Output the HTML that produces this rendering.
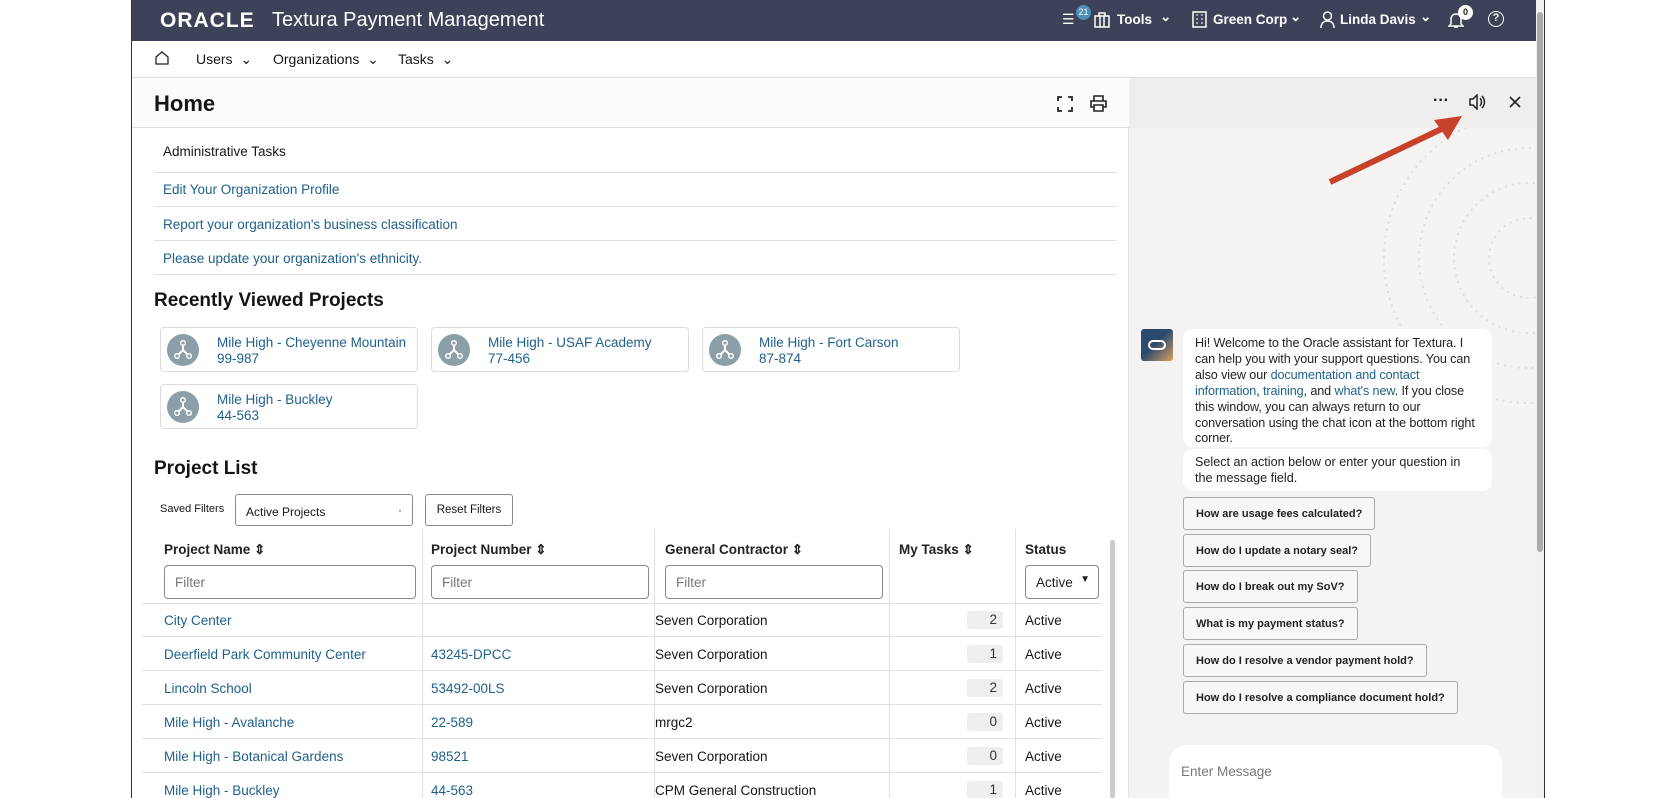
<!DOCTYPE html>
<html><head><meta charset="utf-8"><style>
*{box-sizing:border-box;margin:0;padding:0}
body{width:1680px;height:798px;background:#fff;font-family:"Liberation Sans",sans-serif;position:relative;overflow:hidden;color:#161513}
.frame{position:absolute;left:131px;top:0;width:1414px;height:798px;border-left:1px solid #333;border-right:1px solid #333;overflow:hidden;background:#fff}
.hdr{position:absolute;left:0;top:0;width:100%;height:41px;background:#3e4259;color:#fff}
.abs{position:absolute}
.nav{position:absolute;top:41px;left:0;width:1412px;height:37px;border-bottom:1px solid #ddd;font-size:14px}
.main{position:absolute;left:0;top:78px;width:997px;height:720px;background:#fff;border-right:1px solid #e2e2e2}
.chat{position:absolute;left:997px;top:78px;width:407px;height:720px;background:#f4f3f1}
.sb{position:absolute;left:1404px;top:0;width:8px;height:798px;background:#f1f1f1}
a,.lk{color:#1f5f8b;text-decoration:none}
.line{position:absolute;height:1px;background:#e0e0e0}
.card{position:absolute;width:258px;height:45px;border:1px solid #ddd;border-radius:4px;background:#fff;font-size:13.5px;color:#1f5f8b}
.card .av{position:absolute;left:6px;top:6px;width:32px;height:32px;border-radius:50%;background:#8c9ea8}
.card .t{position:absolute;left:56px;top:7px;line-height:16px}
.th{position:absolute;top:542px;font-size:13.5px;font-weight:bold;color:#222}
.fi{position:absolute;top:565px;height:34px;border:1px solid #888;border-radius:4px;font-size:13.5px;color:#777;padding:9px 10px}
.row{position:absolute;left:10px;width:960px;height:34px;border-bottom:1px solid #e0e0e0;font-size:13.5px}
.row span{position:absolute;top:10px}
.cnt{position:absolute;left:825px;top:8px;width:36px;height:18px;background:#eee;border-radius:3px;text-align:right;padding-right:6px;padding-top:1px;color:#333}
.btn{position:absolute;height:33px;border:1px solid #aaa;border-radius:3px;background:#f7f7f7;font-size:11px;font-weight:bold;padding:10px 12px;color:#222;white-space:nowrap}
.hi{position:absolute;top:12px;font-size:13.5px;font-weight:bold}
</style></head><body>
<div class="frame">
<div class="hdr">
 <div class="abs" style="left:28px;top:9px;font-size:21px;letter-spacing:1px;font-weight:bold">ORACLE</div>
 <div class="abs" style="left:140px;top:9px;font-size:20px">Textura Payment Management</div>
 <div class="abs" style="left:930px;top:11px;font-size:14px">☰</div>
 <div class="abs" style="left:944px;top:5px;width:15px;height:15px;border-radius:50%;background:#4a90b8;font-size:9px;text-align:center;line-height:15px">21</div>
 <svg class="abs" style="left:962px;top:12px" width="16" height="16"><rect x="1" y="4" width="14" height="11" fill="none" stroke="#fff" stroke-width="1.5"/><path d="M5 4V1h6v3M6 4v11M10 4v11" stroke="#fff" fill="none" stroke-width="1.5"/></svg>
 <div class="hi" style="left:985px">Tools</div><div class="hi" style="left:1028px;top:9px">⌄</div>
 <svg class="abs" style="left:1060px;top:11px" width="15" height="17"><rect x="1" y="1" width="13" height="15" fill="none" stroke="#fff" stroke-width="1.5"/><path d="M4 4h2M9 4h2M4 8h2M9 8h2M4 12h2M9 12h2" stroke="#fff"/></svg>
 <div class="hi" style="left:1081px">Green Corp</div><div class="hi" style="left:1158px;top:9px">⌄</div>
 <svg class="abs" style="left:1188px;top:11px" width="15" height="17"><circle cx="7.5" cy="5" r="4" fill="none" stroke="#fff" stroke-width="1.5"/><path d="M1 17c0-5 3-7 6.5-7s6.5 2 6.5 7" fill="none" stroke="#fff" stroke-width="1.5"/></svg>
 <div class="hi" style="left:1208px">Linda Davis</div><div class="hi" style="left:1288px;top:9px">⌄</div>
 <svg class="abs" style="left:1316px;top:11px" width="16" height="18"><path d="M3 13V8a5 5 0 0 1 10 0v5l2 2H1z M6 16h4" fill="none" stroke="#fff" stroke-width="1.5"/></svg>
 <div class="abs" style="left:1326px;top:5px;width:15px;height:15px;border-radius:50%;background:#fff;color:#222;font-size:9px;font-weight:bold;text-align:center;line-height:15px">0</div>
 <div class="abs" style="left:1356px;top:11px;width:16px;height:16px;border:1.5px solid #fff;border-radius:50%;font-size:11px;text-align:center;line-height:13px;font-weight:bold">?</div>
</div>
<div class="nav">
 <svg class="abs" style="left:23px;top:10px" width="14" height="14"><path d="M1 6L7 1l6 5v7H1z" fill="none" stroke="#222" stroke-width="1.3"/></svg>
 <div class="abs" style="left:64px;top:10px">Users &nbsp;⌄</div>
 <div class="abs" style="left:141px;top:10px">Organizations &nbsp;⌄</div>
 <div class="abs" style="left:266px;top:10px">Tasks &nbsp;⌄</div>
</div>
<div class="main"></div>
<div class="abs" style="left:0;top:78px;width:997px;height:50px;background:#fcfcfc;border-bottom:1px solid #e0e0e0"></div>
<div class="abs" style="left:22px;top:91px;font-size:22px;font-weight:bold">Home</div>
<svg class="abs" style="left:925px;top:96px" width="16" height="16"><path d="M1 5V1h4M11 1h4v4M15 11v4h-4M5 15H1v-4" fill="none" stroke="#222" stroke-width="1.8"/></svg>
<svg class="abs" style="left:958px;top:95px" width="17" height="17"><path d="M4 6V1h9v5M4 12H1V6h15v6h-3M4 10h9v6H4z" fill="none" stroke="#222" stroke-width="1.6"/></svg>
<div class="abs" style="left:31px;top:144px;font-size:13.5px">Administrative Tasks</div>
<div class="line" style="left:22px;top:172px;width:962px"></div>
<div class="abs lk" style="left:31px;top:182px;font-size:13.5px">Edit Your Organization Profile</div>
<div class="line" style="left:22px;top:206px;width:962px"></div>
<div class="abs lk" style="left:31px;top:217px;font-size:13.5px">Report your organization's business classification</div>
<div class="line" style="left:22px;top:240px;width:962px"></div>
<div class="abs lk" style="left:31px;top:251px;font-size:13.5px">Please update your organization's ethnicity.</div>
<div class="line" style="left:22px;top:274px;width:962px"></div>
<div class="abs" style="left:22px;top:290px;font-size:19px;font-weight:bold">Recently Viewed Projects</div>
<svg width="0" height="0" style="position:absolute"><defs><g id="ic"><path d="M16 9v7l-6 6M16 16l6 6" stroke="#fff" stroke-width="2" fill="none"/><circle cx="16" cy="9" r="2.3" fill="#8c9ea8" stroke="#fff" stroke-width="1.5"/><circle cx="10" cy="22" r="2.3" fill="#8c9ea8" stroke="#fff" stroke-width="1.5"/><circle cx="22" cy="22" r="2.3" fill="#8c9ea8" stroke="#fff" stroke-width="1.5"/></g></defs></svg>
<div class="card" style="left:28px;top:327px"><div class="av"><svg width="32" height="32"><use href="#ic"/></svg></div><div class="t">Mile High - Cheyenne Mountain<br>99-987</div></div>
<div class="card" style="left:299px;top:327px"><div class="av"><svg width="32" height="32"><use href="#ic"/></svg></div><div class="t">Mile High - USAF Academy<br>77-456</div></div>
<div class="card" style="left:570px;top:327px"><div class="av"><svg width="32" height="32"><use href="#ic"/></svg></div><div class="t">Mile High - Fort Carson<br>87-874</div></div>
<div class="card" style="left:28px;top:384px"><div class="av"><svg width="32" height="32"><use href="#ic"/></svg></div><div class="t">Mile High - Buckley<br>44-563</div></div>
<div class="abs" style="left:22px;top:458px;font-size:19px;font-weight:bold">Project List</div>
<div class="abs" style="left:28px;top:503px;font-size:11px">Saved Filters</div>
<div class="abs" style="left:103px;top:494px;width:178px;height:32px;border:1px solid #888;border-radius:3px;font-size:12px;padding:10px 10px">Active Projects<span style="position:absolute;right:10px;top:8px">·</span></div>
<div class="abs" style="left:293px;top:494px;width:88px;height:32px;border:1px solid #888;border-radius:3px;font-size:11.5px;padding:9px 0;text-align:center;white-space:nowrap">Reset Filters</div>
<div class="abs" style="left:290px;top:529px;width:1px;height:269px;background:#e0e0e0"></div>
<div class="abs" style="left:522px;top:529px;width:1px;height:269px;background:#e0e0e0"></div>
<div class="abs" style="left:757px;top:529px;width:1px;height:269px;background:#e0e0e0"></div>
<div class="abs" style="left:883px;top:529px;width:1px;height:269px;background:#e0e0e0"></div>
<div class="th" style="left:32px">Project Name ⇕</div>
<div class="th" style="left:299px">Project Number ⇕</div>
<div class="th" style="left:533px">General Contractor ⇕</div>
<div class="th" style="left:767px">My Tasks ⇕</div>
<div class="th" style="left:893px">Status</div>
<div class="fi" style="left:32px;width:252px">Filter</div>
<div class="fi" style="left:299px;width:218px">Filter</div>
<div class="fi" style="left:533px;width:218px">Filter</div>
<div class="fi" style="left:893px;width:74px;color:#222;font-weight:normal">Active <span style="position:absolute;right:8px;top:8px;font-size:10px">▼</span></div>
<div class="row" style="top:570px"></div>
<div class="row" style="top:603px"><span class="lk" style="left:22px">City Center</span><span style="left:513px">Seven Corporation</span><div class="cnt">2</div><span style="left:883px">Active</span></div>
<div class="row" style="top:637px"><span class="lk" style="left:22px">Deerfield Park Community Center</span><span class="lk" style="left:289px">43245-DPCC</span><span style="left:513px">Seven Corporation</span><div class="cnt">1</div><span style="left:883px">Active</span></div>
<div class="row" style="top:671px"><span class="lk" style="left:22px">Lincoln School</span><span class="lk" style="left:289px">53492-00LS</span><span style="left:513px">Seven Corporation</span><div class="cnt">2</div><span style="left:883px">Active</span></div>
<div class="row" style="top:705px"><span class="lk" style="left:22px">Mile High - Avalanche</span><span class="lk" style="left:289px">22-589</span><span style="left:513px">mrgc2</span><div class="cnt">0</div><span style="left:883px">Active</span></div>
<div class="row" style="top:739px"><span class="lk" style="left:22px">Mile High - Botanical Gardens</span><span class="lk" style="left:289px">98521</span><span style="left:513px">Seven Corporation</span><div class="cnt">0</div><span style="left:883px">Active</span></div>
<div class="row" style="top:773px;border:none"><span class="lk" style="left:22px">Mile High - Buckley</span><span class="lk" style="left:289px">44-563</span><span style="left:513px">CPM General Construction</span><div class="cnt">1</div><span style="left:883px">Active</span></div>
<div class="abs" style="left:978px;top:540px;width:5px;height:258px;background:#ccc;border-radius:2px"></div>

<div class="chat">
 <svg class="abs" style="left:150px;top:30px" width="260" height="300"><g fill="none" stroke="#ddd" stroke-width="2" stroke-dasharray="2 5"><circle cx="250" cy="150" r="40"/><circle cx="250" cy="150" r="75"/><circle cx="250" cy="150" r="110"/><circle cx="250" cy="150" r="145"/></g></svg>
 <div class="abs" style="left:0;top:0;width:407px;height:50px;background:#efeeec"></div>
 <div class="abs" style="left:304px;top:14px;font-size:16px;font-weight:bold">···</div>
 <svg class="abs" style="left:339px;top:16px" width="18" height="16"><path d="M2 5h3l4-4v14l-4-4H2z M12 4q3 4 0 8 M14 2q5 6 0 12" fill="none" stroke="#222" stroke-width="1.5"/></svg>
 <svg class="abs" style="left:380px;top:18px" width="12" height="12"><path d="M1 1l10 10M11 1L1 11" stroke="#222" stroke-width="1.6"/></svg>
 <div class="abs" style="left:12px;top:251px;width:32px;height:32px;border-radius:3px;background:linear-gradient(135deg,#2b4b6e 45%,#d8a060)"><div style="position:absolute;left:7px;top:11px;width:18px;height:10px;border:2.5px solid #fff;border-radius:6px"></div></div>
 <div class="abs" style="left:54px;top:251px;width:309px;height:118px;background:#fff;border-radius:10px;font-size:12.6px;line-height:15.9px;padding:7px 12px;color:#222;letter-spacing:-0.1px">Hi! Welcome to the Oracle assistant for Textura. I can help you with your support questions. You can also view our <u class="lk">documentation and contact information</u>, <u class="lk">training</u>, and <u class="lk">what's new</u>. If you close this window, you can always return to our conversation using the chat icon at the bottom right corner.</div>
 <div class="abs" style="left:54px;top:371px;width:309px;height:42px;background:#fff;border-radius:10px;font-size:12.6px;line-height:16px;padding:5px 12px;color:#222">Select an action below or enter your question in the message field.</div>
 <div class="btn" style="left:54px;top:419px">How are usage fees calculated?</div>
 <div class="btn" style="left:54px;top:456px">How do I update a notary seal?</div>
 <div class="btn" style="left:54px;top:492px">How do I break out my SoV?</div>
 <div class="btn" style="left:54px;top:529px">What is my payment status?</div>
 <div class="btn" style="left:54px;top:566px">How do I resolve a vendor payment hold?</div>
 <div class="btn" style="left:54px;top:603px">How do I resolve a compliance document hold?</div>
 <div class="abs" style="left:40px;top:667px;width:333px;height:70px;background:#fff;border-radius:18px;font-size:13.5px;color:#777;padding:19px 12px">Enter Message</div>
</div>
<svg class="abs" style="left:1190px;top:100px" width="160" height="90"><path d="M8 82L130 24" stroke="#c8412b" stroke-width="6"/><path d="M140 16L112 20L126 40z" fill="#c8412b"/></svg>
<div class="sb"><div style="position:absolute;left:1px;top:12px;width:6px;height:540px;background:#aaa;border-radius:3px"></div></div>
</div>
</body></html>
